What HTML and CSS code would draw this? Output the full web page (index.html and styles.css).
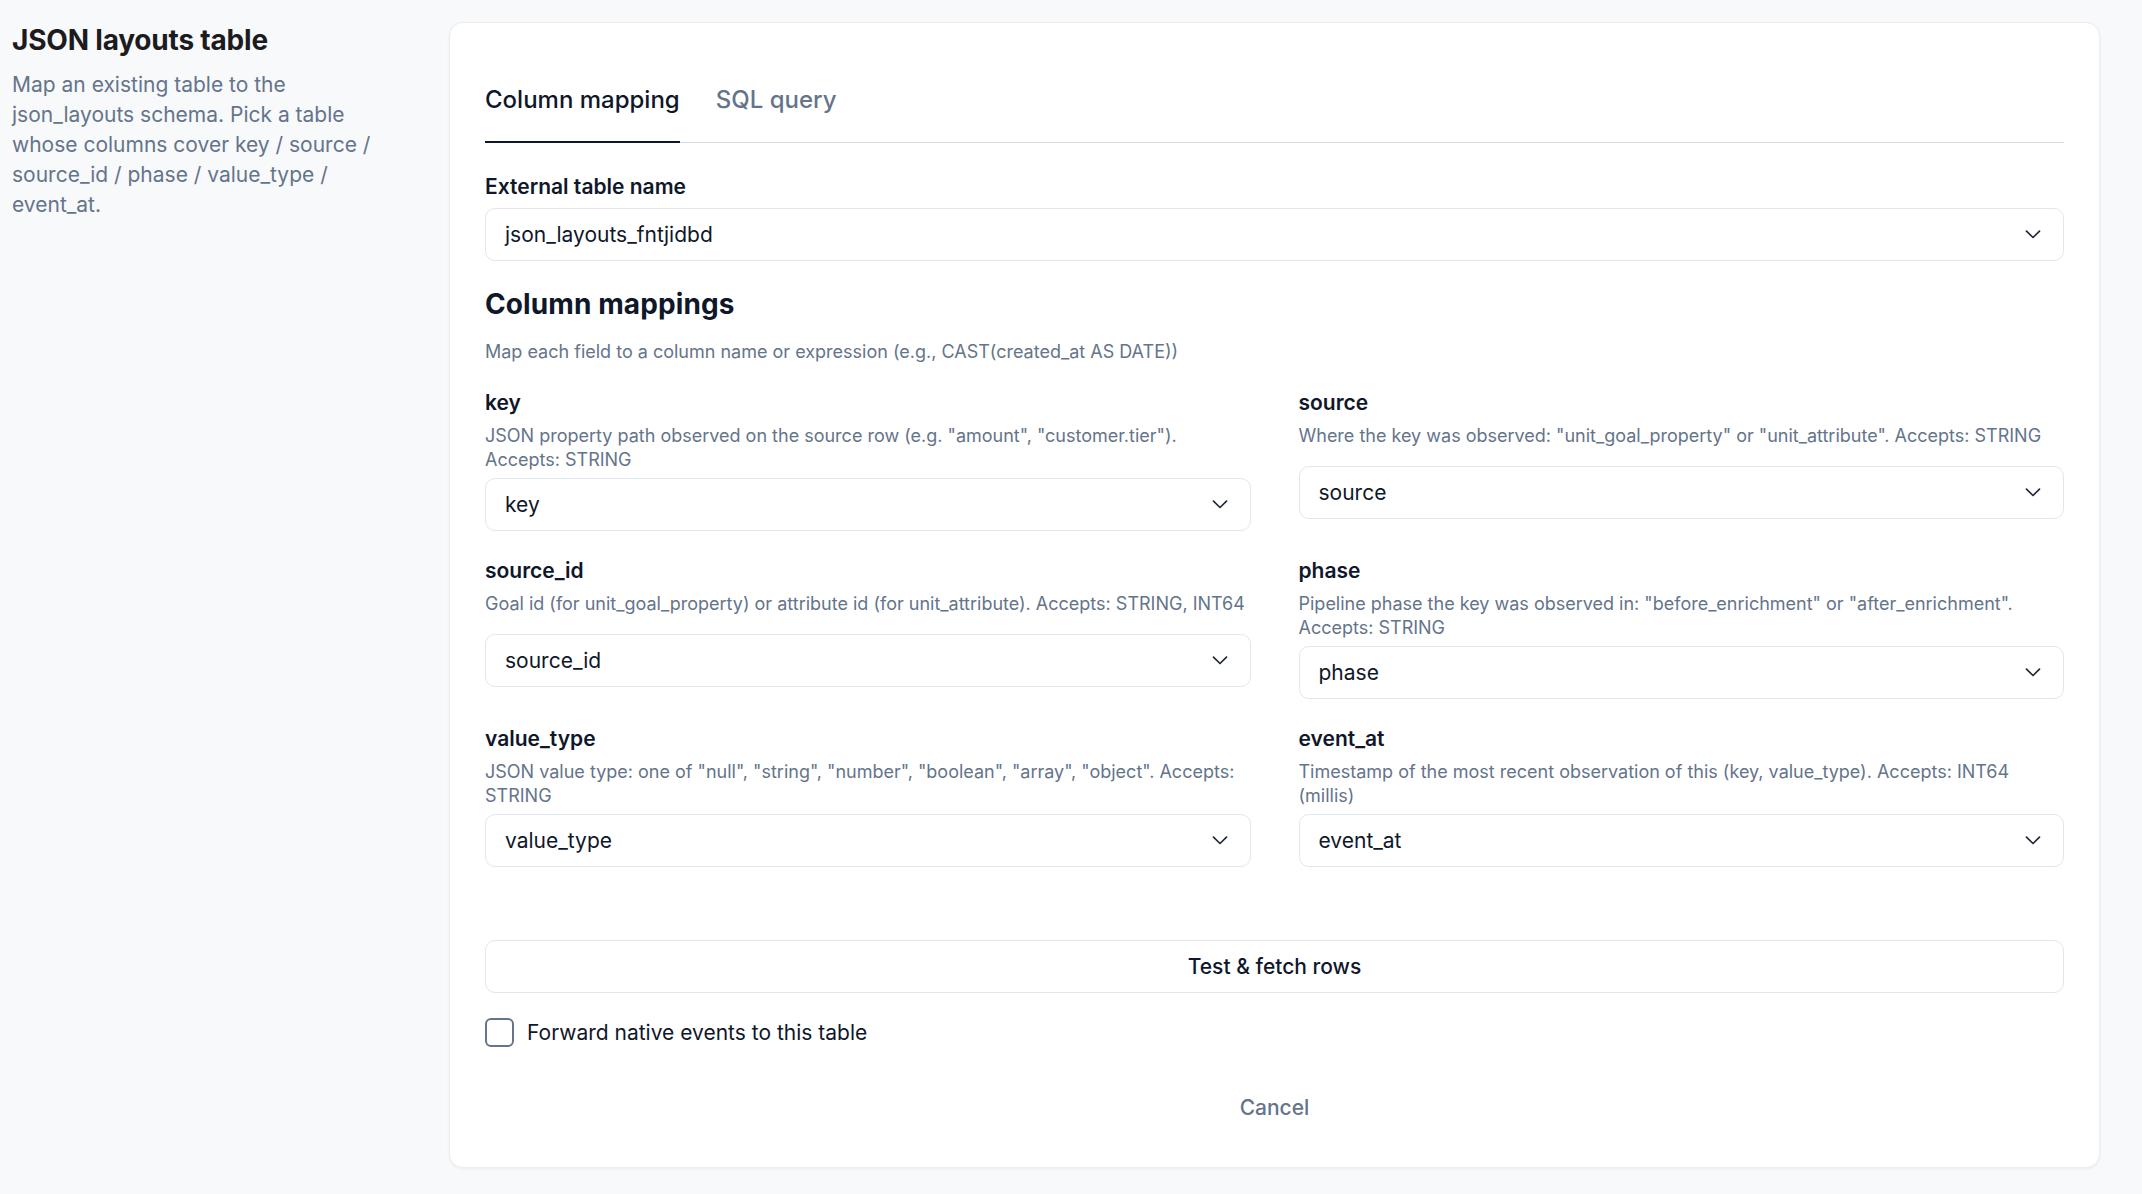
FILE: index.html
```html
<!DOCTYPE html>
<html lang="en">
<head>
<meta charset="UTF-8">
<meta name="viewport" content="width=device-width, initial-scale=1.0">
<title>JSON layouts table</title>
<link rel="stylesheet" href="styles.css">
</head>
<body>
<div class="page">
    <aside class="intro">
        <h1>JSON layouts table</h1>
        <p>Map an existing table to the json_layouts schema. Pick a table whose columns cover key / source / source_id / phase / value_type / event_at.</p>
    </aside>

    <main class="card">
        <div class="tabs">
            <button class="tab active">Column mapping</button>
            <button class="tab">SQL query</button>
        </div>

        <div class="field table-field">
            <label class="label">External table name</label>
            <div class="select">
                <span>json_layouts_fntjidbd</span>
                <svg class="chevron" viewBox="0 0 16 9" width="16" height="9"><path d="M1.5 1.2 8 7.5l6.5-6.3"/></svg>
            </div>
        </div>

        <h2>Column mappings</h2>
        <p class="hint">Map each field to a column name or expression (e.g., CAST(created_at AS DATE))</p>

        <div class="mappings">
            <div class="field">
                <label class="label">key</label>
                <p class="desc">JSON property path observed on the source row (e.g. "amount", "customer.tier"). Accepts: STRING</p>
                <div class="select">
                    <span>key</span>
                    <svg class="chevron" viewBox="0 0 16 9" width="16" height="9"><path d="M1.5 1.2 8 7.5l6.5-6.3"/></svg>
                </div>
            </div>
            <div class="field">
                <label class="label">source</label>
                <p class="desc">Where the key was observed: "unit_goal_property" or "unit_attribute". Accepts: STRING</p>
                <div class="select">
                    <span>source</span>
                    <svg class="chevron" viewBox="0 0 16 9" width="16" height="9"><path d="M1.5 1.2 8 7.5l6.5-6.3"/></svg>
                </div>
            </div>
            <div class="field">
                <label class="label">source_id</label>
                <p class="desc">Goal id (for unit_goal_property) or attribute id (for unit_attribute). Accepts: STRING, INT64</p>
                <div class="select">
                    <span>source_id</span>
                    <svg class="chevron" viewBox="0 0 16 9" width="16" height="9"><path d="M1.5 1.2 8 7.5l6.5-6.3"/></svg>
                </div>
            </div>
            <div class="field">
                <label class="label">phase</label>
                <p class="desc">Pipeline phase the key was observed in: "before_enrichment" or "after_enrichment". Accepts: STRING</p>
                <div class="select">
                    <span>phase</span>
                    <svg class="chevron" viewBox="0 0 16 9" width="16" height="9"><path d="M1.5 1.2 8 7.5l6.5-6.3"/></svg>
                </div>
            </div>
            <div class="field">
                <label class="label">value_type</label>
                <p class="desc">JSON value type: one of "null", "string", "number", "boolean", "array", "object". Accepts: STRING</p>
                <div class="select">
                    <span>value_type</span>
                    <svg class="chevron" viewBox="0 0 16 9" width="16" height="9"><path d="M1.5 1.2 8 7.5l6.5-6.3"/></svg>
                </div>
            </div>
            <div class="field">
                <label class="label">event_at</label>
                <p class="desc">Timestamp of the most recent observation of this (key, value_type). Accepts: INT64 (millis)</p>
                <div class="select">
                    <span>event_at</span>
                    <svg class="chevron" viewBox="0 0 16 9" width="16" height="9"><path d="M1.5 1.2 8 7.5l6.5-6.3"/></svg>
                </div>
            </div>
        </div>

        <button class="test-button">Test &amp; fetch rows</button>

        <label class="forward">
            <input type="checkbox" class="checkbox">
            <span>Forward native events to this table</span>
        </label>

        <div class="actions">
            <button class="cancel">Cancel</button>
        </div>
    </main>
</div>
</body>
</html>
```
FILE: styles.css
```css
body {
    margin: 0;
    padding: 0;
    background-color: #f8f9fb;
    font-family: 'Inter', 'Liberation Sans', sans-serif;
    color: #0f172a;
}
.page {
    display: flex;
    align-items: flex-start;
    padding: 22px 42px 27px 12px;
}
.intro {
    width: 385px;
    flex-shrink: 0;
    margin-right: 52px;
}
.intro h1 {
    margin: 0;
    font-size: 28px;
    line-height: 36px;
    font-weight: 700;
    color: #1c1c1f;
    letter-spacing: -0.2px;
}
.intro p {
    margin: 12px 0 0;
    font-size: 21px;
    line-height: 30px;
    color: #64748b;
}
.card {
    flex: 1;
    background-color: #fff;
    border: 1px solid #eceef2;
    border-radius: 14px;
    box-shadow: 0 1px 3px rgba(15, 23, 42, 0.06);
    padding: 35px 35px 35px;
}
.tabs {
    display: flex;
    gap: 36px;
    border-bottom: 1px solid #d6d8e4;
}
.tab {
    background: none;
    border: none;
    border-bottom: 2px solid transparent;
    margin-bottom: -1px;
    padding: 24px 0 23px;
    font-family: inherit;
    font-size: 24px;
    line-height: 36px;
    font-weight: 500;
    color: #64748b;
    cursor: pointer;
}
.tab.active {
    color: #0f172a;
    border-bottom-color: #0f172a;
}
.field {
    display: flex;
    flex-direction: column;
}
.table-field {
    margin-top: 30px;
}
.label {
    font-size: 21px;
    line-height: 28px;
    font-weight: 600;
    color: #0f172a;
}
.table-field .label {
    margin-bottom: 7px;
}
.select {
    display: flex;
    justify-content: space-between;
    align-items: center;
    height: 51px;
    padding: 0 22px 0 19px;
    border: 1px solid #e2e6ee;
    border-radius: 10px;
    background-color: #fff;
    font-size: 21px;
    color: #0f172a;
}
.chevron {
    fill: none;
    stroke: #1e293b;
    stroke-width: 1.7;
    stroke-linecap: round;
    stroke-linejoin: round;
}
h2 {
    margin: 25px 0 0;
    font-size: 28px;
    line-height: 36px;
    font-weight: 700;
    color: #0f172a;
    letter-spacing: 0.1px;
}
.hint {
    margin: 18px 0 0;
    font-size: 18px;
    line-height: 24px;
    color: #64748b;
}
.mappings {
    display: grid;
    grid-template-columns: 1fr 1fr;
    column-gap: 48px;
    row-gap: 26px;
    margin-top: 25px;
}
.desc {
    margin: 7px 0 6px;
    min-height: 36px;
    font-size: 18px;
    line-height: 24px;
    color: #64748b;
}
.test-button {
    display: block;
    width: 100%;
    height: 53px;
    margin-top: 73px;
    background-color: #fff;
    border: 1px solid #e2e6ee;
    border-radius: 10px;
    font-family: inherit;
    font-size: 21px;
    font-weight: 500;
    color: #0f172a;
    cursor: pointer;
}
.forward {
    display: flex;
    align-items: center;
    gap: 13px;
    margin-top: 25px;
    font-size: 21px;
    line-height: 28px;
    color: #0f172a;
}
.checkbox {
    appearance: none;
    width: 29px;
    height: 29px;
    margin: 0;
    border: 2.5px solid #64748b;
    border-radius: 6px;
    background-color: #fff;
}
.actions {
    display: flex;
    justify-content: center;
    margin-top: 37px;
}
.cancel {
    background: none;
    border: none;
    padding: 10px 20px;
    font-family: inherit;
    font-size: 21px;
    line-height: 28px;
    font-weight: 500;
    color: #64748b;
    cursor: pointer;
}
```
